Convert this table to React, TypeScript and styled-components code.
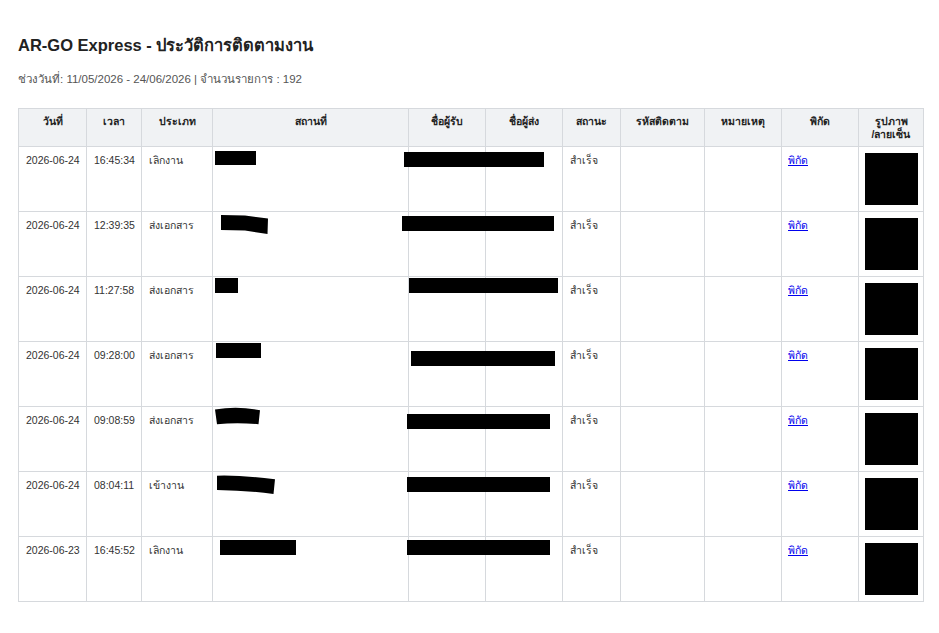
import React from "react";
import styled, { createGlobalStyle } from "styled-components";

const GlobalStyle = createGlobalStyle`
  html, body { margin: 0; padding: 0; background: #ffffff; }
  body { font-family: "Liberation Sans", Arial, "Noto Sans", sans-serif; color: #333; }
`;

const Page = styled.div`
  padding: 34px 18px 20px 18px;
`;

const Title = styled.h2`
  margin: 0;
  font-size: 16.5px;
  line-height: 22px;
  font-weight: 700;
  color: #222;
`;

const Meta = styled.div`
  margin: 15px 0 21px 0;
  font-size: 11.5px;
  line-height: 16px;
  color: #555;
`;

const Table = styled.table`
  border-collapse: collapse;
  table-layout: fixed;
  width: 905px;
  font-size: 10.5px;
`;

const Th = styled.th`
  background: #f0f2f4;
  border: 1px solid #d6d9dd;
  padding: 6px 6px 5px;
  line-height: 13px;
  font-weight: 700;
  text-align: center;
  vertical-align: top;
  color: #222;
`;

const Td = styled.td`
  position: relative;
  border: 1px solid #d6d9dd;
  padding: 6px 7px;
  height: 52px;
  line-height: 14px;
  vertical-align: top;
  color: #333;
  white-space: nowrap;
`;

const PhotoCell = styled(Td)`
  padding: 6px;
`;

const Photo = styled.div`
  width: 53px;
  height: 52px;
  background: #000;
`;

const MapLink = styled.a`
  color: #0000ee;
  text-decoration: underline;
  margin-left: -1px;
`;

const Redact = styled.svg<{ $x: number; $y: number }>`
  position: absolute;
  left: ${(p) => p.$x}px;
  top: ${(p) => p.$y}px;
  overflow: visible;
  z-index: 1;
`;

type Shape = { x: number; y: number; w: number; h: number; d?: string };

const Block: React.FC<{ s: Shape }> = ({ s }) => (
  <Redact $x={s.x} $y={s.y} width={s.w} height={s.h} viewBox={`0 0 ${s.w} ${s.h}`}>
    <path d={s.d ?? `M0 0H${s.w}V${s.h}H0Z`} fill="#000" />
  </Redact>
);

const cols = [68, 55, 71, 196, 77, 77, 58, 84, 77, 77, 65];

type Row = {
  date: string;
  time: string;
  type: string;
  place: Shape;
  recv: Shape;
};

const rows: Row[] = [
  { date: "2026-06-24", time: "16:45:34", type: "เลิกงาน", place: { x: 2, y: 4, w: 41, h: 14 }, recv: { x: -5, y: 5, w: 140, h: 15 } },
  {
    date: "2026-06-24", time: "12:39:35", type: "ส่งเอกสาร",
    place: { x: 8, y: 3, w: 47, h: 19, d: "M0 0L24 0.5L47 3.5L46.5 19L24 15.5L0 15Z" },
    recv: { x: -7, y: 4, w: 152, h: 15 },
  },
  { date: "2026-06-24", time: "11:27:58", type: "ส่งเอกสาร", place: { x: 2, y: 1, w: 23, h: 15 }, recv: { x: 0, y: 1, w: 149, h: 15 } },
  { date: "2026-06-24", time: "09:28:00", type: "ส่งเอกสาร", place: { x: 3, y: 1, w: 45, h: 15 }, recv: { x: 2, y: 9, w: 144, h: 15 } },
  {
    date: "2026-06-24", time: "09:08:59", type: "ส่งเอกสาร",
    place: { x: 2, y: 0, w: 45, h: 18, d: "M0 2.6Q22 -1.5 45 3.3L43.5 17.3Q22 15 2 17.3Z" },
    recv: { x: -2, y: 7, w: 143, h: 15 },
  },
  {
    date: "2026-06-24", time: "08:04:11", type: "เข้างาน",
    place: { x: 4, y: 3, w: 58, h: 19, d: "M0 0.7Q25 0 58 4.3L56.5 19Q30 15.5 0 15Z" },
    recv: { x: -2, y: 5, w: 143, h: 15 },
  },
  { date: "2026-06-23", time: "16:45:52", type: "เลิกงาน", place: { x: 7, y: 3, w: 76, h: 15 }, recv: { x: -2, y: 3, w: 143, h: 15 } },
];

const headers = ["วันที่", "เวลา", "ประเภท", "สถานที่", "ชื่อผู้รับ", "ชื่อผู้ส่ง", "สถานะ", "รหัสติดตาม", "หมายเหตุ", "พิกัด"];

export default function App() {
  return (
    <Page>
      <GlobalStyle />
      <Title>AR-GO Express - ประวัติการติดตามงาน</Title>
      <Meta>ช่วงวันที่: 11/05/2026 - 24/06/2026 | จำนวนรายการ : 192</Meta>
      <Table>
        <colgroup>
          {cols.map((w, i) => (
            <col key={i} style={{ width: w }} />
          ))}
        </colgroup>
        <thead>
          <tr>
            {headers.map((h) => (
              <Th key={h}>{h}</Th>
            ))}
            <Th>
              รูปภาพ
              <br />
              /ลายเซ็น
            </Th>
          </tr>
        </thead>
        <tbody>
          {rows.map((r, i) => (
            <tr key={i}>
              <Td>{r.date}</Td>
              <Td>{r.time}</Td>
              <Td>{r.type}</Td>
              <Td>
                <Block s={r.place} />
              </Td>
              <Td>
                <Block s={r.recv} />
              </Td>
              <Td />
              <Td>สำเร็จ</Td>
              <Td />
              <Td />
              <Td>
                <MapLink href="#">พิกัด</MapLink>
              </Td>
              <PhotoCell>
                <Photo />
              </PhotoCell>
            </tr>
          ))}
        </tbody>
      </Table>
    </Page>
  );
}
